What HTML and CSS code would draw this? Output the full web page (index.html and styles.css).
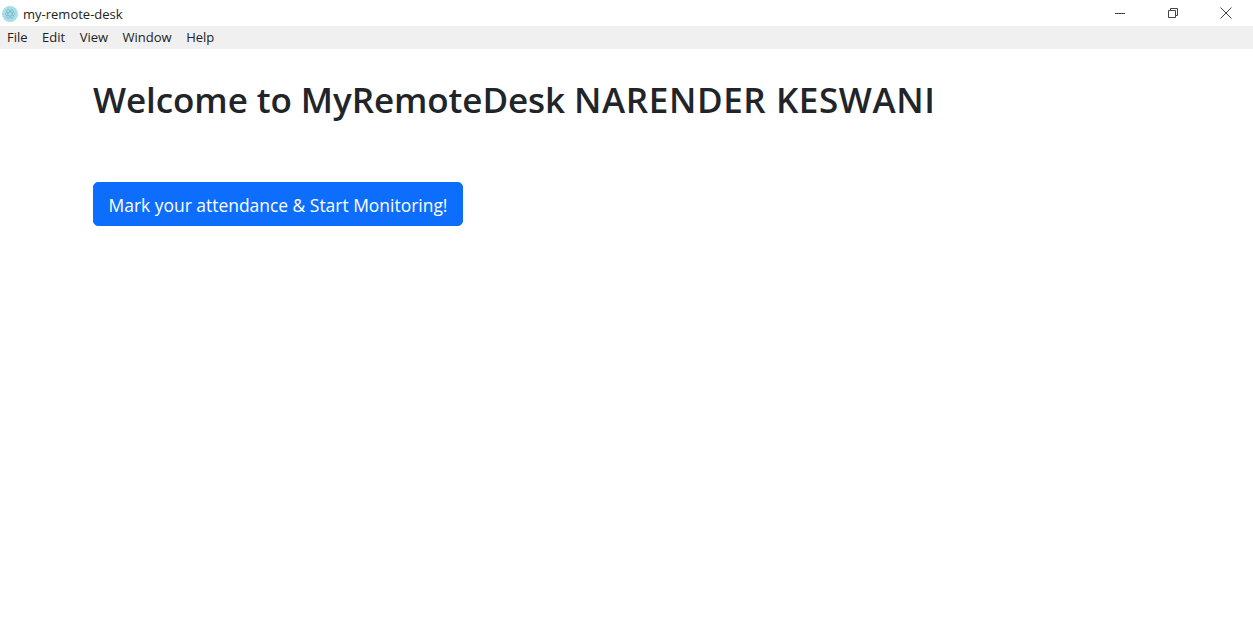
FILE: index.html
```html
<!DOCTYPE html>
<html lang="en">
<head>
<meta charset="utf-8" />
<title>my-remote-desk</title>
<link rel="stylesheet" href="styles.css">
</head>
<body>

<div class="title_bar">
	<div class="title_name">
		<svg class="app_icon" width="16" height="16" viewBox="0 0 16 16">
			<circle cx="8" cy="8" r="8" fill="#a6dfe8"/>
			<g fill="none" stroke="#7fb0c4" stroke-width="0.6">
				<ellipse cx="8" cy="8" rx="5" ry="2"/>
				<ellipse cx="8" cy="8" rx="5" ry="2" transform="rotate(60 8 8)"/>
				<ellipse cx="8" cy="8" rx="5" ry="2" transform="rotate(120 8 8)"/>
			</g>
		</svg>
		<span>my-remote-desk</span>
	</div>
	<div class="win_btns">
		<div class="win_btn">
			<svg width="12" height="12" viewBox="0 0 12 12"><path d="M1 6.5H11" stroke="#444" fill="none"/></svg>
		</div>
		<div class="win_btn">
			<svg width="12" height="12" viewBox="0 0 12 12"><path d="M1.5 3.5H8.5V10.5H1.5ZM3.5 3.5V1.5H10.5V8.5H8.5" stroke="#444" fill="none"/></svg>
		</div>
		<div class="win_btn">
			<svg width="12" height="12" viewBox="0 0 12 12"><path d="M.5 .5L11.5 11.5M11.5 .5L.5 11.5" stroke="#444" fill="none"/></svg>
		</div>
	</div>
</div>

<ul class="menu_bar">
	<li>File</li>
	<li>Edit</li>
	<li>View</li>
	<li>Window</li>
	<li>Help</li>
</ul>

<div class="content">
	<h1 class="welcome">Welcome to MyRemoteDesk <span class="user_name">NARENDER KESWANI</span></h1>
	<button class="btn_primary" type="button">Mark your attendance &amp; Start Monitoring!</button>
</div>

</body>
</html>
```

FILE: styles.css
```css
*{ margin:0; padding:0; box-sizing:border-box; }
body{
	background:#fff;
	color:#212529;
	font-family:"Open Sans","Noto Sans",sans-serif;
}
.title_bar{
	display:flex;
	justify-content:space-between;
	height:26px;
	padding-left:3px;
}
.title_name{
	display:flex;
	align-items:center;
	gap:4px;
	padding-top:2px;
	font-size:13px;
	color:#222;
}
.app_icon{
	margin-left:-1px;
	margin-right:1px;
}
.win_btns{
	display:flex;
	padding-right:1px;
}
.win_btn{
	display:flex;
	align-items:center;
	justify-content:center;
	width:53px;
	height:26px;
	padding-bottom:1px;
}
.menu_bar{
	display:flex;
	gap:14.5px;
	height:23px;
	padding-left:7px;
	background:#f0f0f0;
	list-style:none;
	font-size:13px;
	line-height:23px;
	color:#222;
}
.content{
	padding:26px 93px 0;
}
.welcome{
	font-size:35px;
	font-weight:600;
	line-height:50px;
	margin-bottom:57px;
	white-space:nowrap;
	letter-spacing:-0.08px;
}
.user_name{
	letter-spacing:0.6px;
}
.btn_primary{
	display:block;
	width:370px;
	height:44px;
	padding-top:1px;
	background:#0d6efd;
	border:1px solid #0d6efd;
	border-radius:5px;
	color:#fff;
	font:inherit;
	font-size:17.45px;
	white-space:nowrap;
}
```
